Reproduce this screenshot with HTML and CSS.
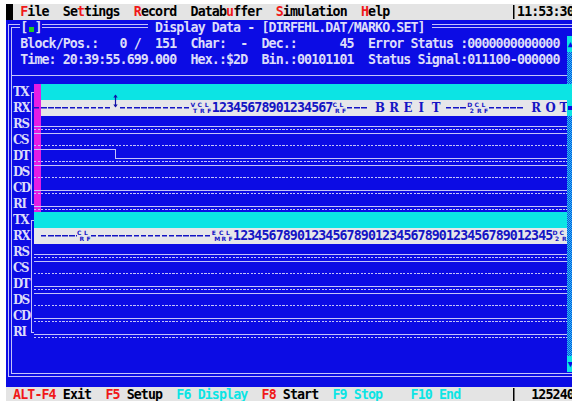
FILE: index.html
```html
<!DOCTYPE html>
<html>
<head>
<meta charset="utf-8">
<title>Display Data</title>
<link rel="stylesheet" href="styles.css">
</head>
<body>
<div class="screen">
  <div class="bar menubar"><span class="mark"> </span> <span class="hk">F</span>ile  Se<span class="hk">t</span>tings  <span class="hk">R</span>ecord  Datab<span class="hk">u</span>ffer  <span class="hk">S</span>imulation  <span class="hk">H</span>elp                 <span class="vbar"> </span>11:53:30</div>

  <div class="desktop">
    <div class="window">
      <div class="titlebar"> <span class="close">[<span class="box"> </span>]</span>               <span class="title"> Display Data - [DIRFEHL.DAT/MARKO.SET] </span></div>
      <div class="wbody">
        <div class="main">
          <div class="info"> Block/Pos.:   0 /  151  Char:  -  Dec.:      45  Error Status :0000000000000</div>
          <div class="info"> Time: 20:39:55.699.000  Hex.:$2D  Bin.:00101101  Status Signal:011100-000000</div>
          <div class="rule"></div>

          <!-- first line set: TX/RX data with cursor column -->
          <div class="group g1">
            <div class="labels"><div>TX</div><div>RX</div><div>RS</div><div>CS</div><div>DT</div><div>DS</div><div>CD</div><div>RI</div></div>
            <div class="bracket"></div>
            <div class="traces">
              <div class="trace tx"></div>
              <div class="trace rx"><span class="dash">           </span><span class="arrow"><svg width="5" height="14" viewBox="0 0 5 14"><path d="M2.5 1V13" stroke="#1010a8" stroke-width="1.2"/><path d="M0.3 3.6L2.5 0.6L4.7 3.6Z M0.3 10.4L2.5 13.4L4.7 10.4Z" fill="#1010a8"/></svg></span><span class="dash">          </span><span class="cc"><i>V</i><i>T</i></span><span class="cc"><i>C</i><i>R</i></span><span class="cc"><i>L</i><i>F</i></span>12345678901234567<span class="cc"><i>C</i><i>R</i></span><span class="cc"><i>L</i><i>F</i></span><span class="dash">   </span> <span class="big">B</span> <span class="big">R</span> <span class="big">E</span> <span class="big">I</span> <span class="big">T</span> <span class="dash">   </span><span class="cc"><i>D</i><i>2</i></span><span class="cc"><i>C</i><i>R</i></span><span class="cc"><i>L</i><i>F</i></span><span class="dash">     </span> <span class="big">R</span> <span class="big">O</span> <span class="big">T</span></div>
              <div class="trace low"></div>
              <div class="trace high"></div>
              <div class="trace fall"></div>
              <div class="trace high"></div>
              <div class="trace low"></div>
              <div class="trace low"></div>
            </div>
          </div>

          <!-- second line set -->
          <div class="group g2">
            <div class="labels"><div>TX</div><div>RX</div><div>RS</div><div>CS</div><div>DT</div><div>DS</div><div>CD</div><div>RI</div></div>
            <div class="bracket"></div>
            <div class="traces">
              <div class="trace tx"></div>
              <div class="trace rx"> <span class="dash">     </span><span class="cc"><i>C</i><i>R</i></span><span class="cc"><i>L</i><i>F</i></span><span class="dash">                 </span><span class="cc"><i>E</i><i>M</i></span><span class="cc"><i>C</i><i>R</i></span><span class="cc"><i>L</i><i>F</i></span>123456789012345678901234567890123456789012345<span class="cc"><i>D</i><i>2</i></span><span class="cc"><i>C</i><i>R</i></span></div>
              <div class="trace low"></div>
              <div class="trace high"></div>
              <div class="trace low"></div>
              <div class="trace high"></div>
              <div class="trace low"></div>
              <div class="trace low"></div>
            </div>
          </div>
        </div>

        <div class="scroll">
          <div class="sb-btn">&#9650;</div>
          <div class="sb-track"><div class="sb-thumb"></div></div>
          <div class="sb-btn">&#9660;</div>
        </div>
      </div>
    </div>
  </div>

  <div class="bar statusbar"> <span class="hk">ALT-F4</span> Exit  <span class="hk">F5</span> Setup  <span class="off">F6 Display</span>  <span class="hk">F8</span> Start  <span class="off">F9 Stop</span>    <span class="off">F10 End</span>       <span class="vbar"> </span>  125240</div>
</div>
</body>
</html>
```

FILE: styles.css
```css
:root {
  --blue: #0c0ce4;
  --cyan: #0ce4e4;
  --mag: #e41ee4;
  --gray: #e4e4e4;
  --band: #e6e6ea;
  --fg: #dcdcfa;
  --line: #c4c4fa;
  --red: #f01818;
  --ink: #1414c4;
  --dots: repeating-linear-gradient(90deg, var(--line) 0 2.2px, transparent 2.2px 3.55px);
}

html, body {
  margin: 0;
}

body {
  width: 572px;
  height: 401px;
  overflow: hidden;
  background: #fff;
}

/* 80 x 25 text screen, 7.1px cells, 16px rows */
.screen {
  margin: 4px 0 0 6px;
  width: 568px;
  font: bold 13.29px/16px "DejaVu Sans Mono", monospace;
  letter-spacing: -0.9px;
}

.bar {
  height: 16px;
  background: var(--gray);
  color: #000;
  white-space: pre;
}

.statusbar {
  height: 14px;
  line-height: 15px;
}

.mark {
  display: inline-block;
  vertical-align: top;
  width: 7.1px;
  height: 16px;
  background: #000;
}

.vbar {
  display: inline-block;
  vertical-align: top;
  width: 7.1px;
  height: 16px;
  background: linear-gradient(#000, #000) 3px 1px / 1.5px 14px no-repeat;
}

.hk { color: var(--red); }
.off { color: var(--cyan); }

.desktop {
  height: 367px;
  box-sizing: border-box;
  padding: 4px 0 0 2px;
  background: var(--blue);
}

.window {
  width: 566px;
  box-sizing: border-box;
  border: 4px double var(--line);
  border-right: 0;
  padding-bottom: 1px;
  color: var(--fg);
}

.titlebar {
  height: 16px;
  margin-top: -8px;
  padding-left: 1.1px;
  white-space: pre;
}

.titlebar .close,
.titlebar .title {
  display: inline-block;
  vertical-align: top;
  height: 16px;
  background: var(--blue);
}

.box {
  display: inline-block;
  vertical-align: top;
  width: 7.1px;
  height: 16px;
  background: linear-gradient(#22cc22, #22cc22) 1.2px 7px / 5px 5px no-repeat;
}

.wbody {
  display: flex;
}

.main {
  width: 554.9px;
  height: 336px;
  flex: none;
}

.info {
  height: 16px;
  padding-left: 1.1px;
  white-space: pre;
}

.rule {
  height: 16px;
  margin-left: -1px;
  background: linear-gradient(var(--line), var(--line)) 0 7px / 100% 1px no-repeat;
}

/* signal line sets */
.group {
  display: flex;
  height: 128px;
  padding-left: 1.1px;
}

.labels {
  width: 14.2px;
  flex: none;
  font: bold 13px/16px "DejaVu Serif", serif;
  font-stretch: condensed;
  letter-spacing: -1.4px;
  color: var(--fg);
  white-space: nowrap;
}

.labels div {
  height: 16px;
}

.bracket {
  flex: none;
  width: 3.6px;
  margin: 8px 0 7px 3.5px;
  box-sizing: border-box;
  border: 1px solid var(--line);
  border-right: 0;
}

.traces {
  width: 532.5px;
  flex: none;
}

.g1 .traces {
  background: linear-gradient(var(--mag), var(--mag)) 0 0 / 7.1px 100% no-repeat;
}

.trace {
  height: 16px;
  white-space: pre;
}

.tx {
  background: linear-gradient(var(--cyan), var(--cyan)) 0 0 / 100% 100% no-repeat;
}

.rx {
  color: var(--ink);
  background: linear-gradient(var(--band), var(--band)) 0 0 / 100% 100% no-repeat;
}

.g1 .tx,
.g1 .rx {
  background-position: 7.1px 0;
}

.low {
  background:
    linear-gradient(var(--line), var(--line)) 0 10px / 100% 1px no-repeat,
    var(--dots) 0 13px / 100% 1px no-repeat;
}

.high {
  background:
    linear-gradient(var(--line), var(--line)) 0 1px / 100% 1px no-repeat,
    var(--dots) 0 13px / 100% 1px no-repeat;
}

/* level drops at the cursor column */
.fall {
  background:
    linear-gradient(var(--line), var(--line)) 0 1px / 82px 1px no-repeat,
    linear-gradient(var(--line), var(--line)) 81px 1px / 1px 10px no-repeat,
    linear-gradient(var(--line), var(--line)) 81px 10px / 100% 1px no-repeat,
    var(--dots) 0 13px / 100% 1px no-repeat;
}

.dash {
  display: inline-block;
  vertical-align: top;
  height: 16px;
  background: repeating-linear-gradient(90deg, var(--ink) 0 5.4px, transparent 5.4px 7.1px) 0 7px / 100% 1.5px no-repeat;
}

.arrow {
  display: inline-block;
  vertical-align: top;
  width: 7.1px;
  height: 16px;
}

.arrow svg {
  display: block;
  margin: -6px auto 0;
}

/* two-letter control character glyphs */
.cc {
  display: inline-block;
  vertical-align: top;
  width: 7.1px;
  height: 16px;
  box-sizing: border-box;
  padding-top: 2px;
  font: bold 6px/5.5px "DejaVu Sans", sans-serif;
  letter-spacing: 0;
}

.cc i {
  display: block;
  font-style: normal;
}

.cc i + i {
  padding-left: 2.5px;
}

.big {
  display: inline-block;
  vertical-align: top;
  width: 7.1px;
  text-align: center;
  font: bold 13px/16px "DejaVu Serif", serif;
  font-stretch: condensed;
  letter-spacing: 0;
}

/* scroll bar */
.scroll {
  width: 7.1px;
  height: 336px;
  flex: none;
  display: flex;
  flex-direction: column;
}

.sb-btn {
  height: 16px;
  background: var(--cyan);
  color: var(--blue);
  text-align: center;
  font-size: 9px;
  letter-spacing: 0;
}

.sb-track {
  flex: 1;
  background: repeating-conic-gradient(#2cc4f0 0 25%, #0c4ee2 0 50%) 0 0 / 2px 2px;
}

.sb-thumb {
  height: 32px;
  margin-top: 32px;
  background: linear-gradient(var(--blue), var(--blue)) 1px 22px / 5px 4px no-repeat, var(--cyan);
}
```
